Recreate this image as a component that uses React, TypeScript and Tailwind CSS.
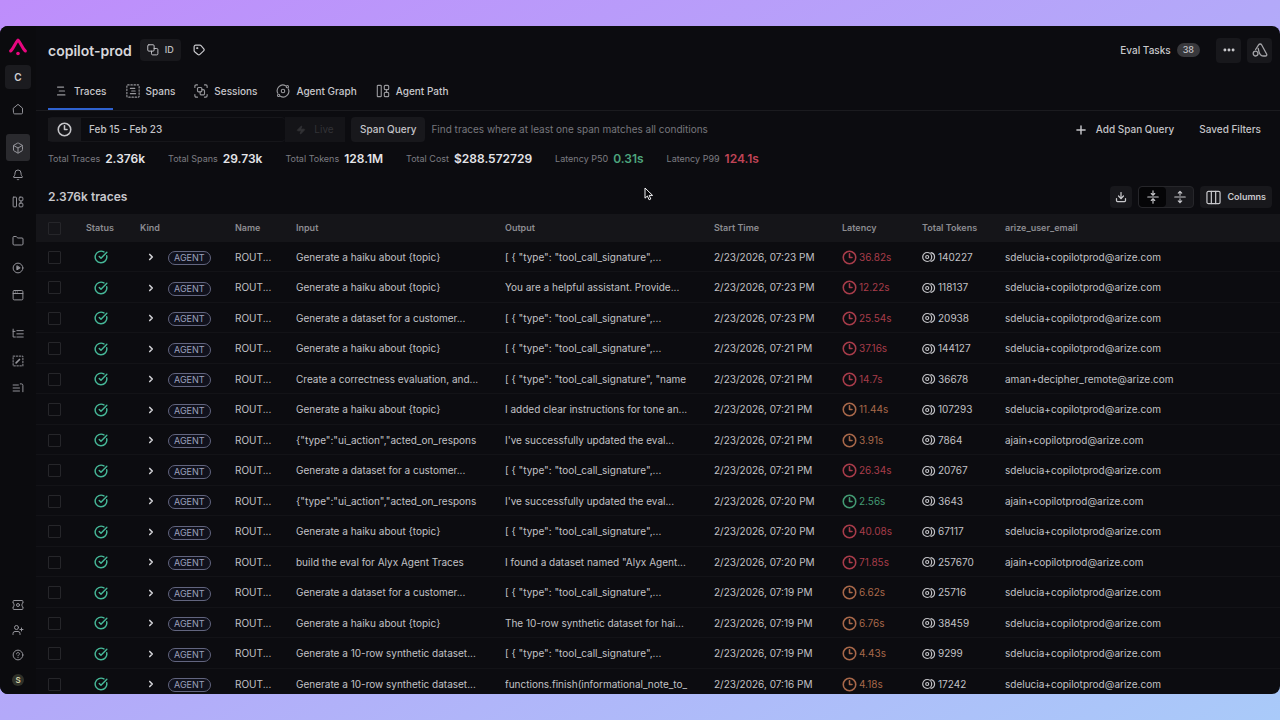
import React, { useState } from "react";
import {
  Bell,
  Box,
  ChevronRight,
  CircleCheckBig,
  CirclePlay,
  Clock3,
  Download,
  Ellipsis,
  Folder,
  Plus,
  UserPlus,
  Zap,
} from "lucide-react";

type LatencyLevel = "high" | "medium" | "low";

interface Trace {
  input: string;
  output: string;
  startTime: string;
  latency: string;
  level: LatencyLevel;
  tokens: string;
  email: string;
}

const HAIKU = "Generate a haiku about {topic}";
const DATASET = "Generate a dataset for a customer...";
const SYNTHETIC = "Generate a 10-row synthetic dataset...";
const UI_ACTION = '{"type":"ui_action","acted_on_respons';
const TOOL_CALL = '[ { "type": "tool_call_signature",...';
const EVAL_UPDATED = "I've successfully updated the eval...";
const SDELUCIA = "sdelucia+copilotprod@arize.com";
const AJAIN = "ajain+copilotprod@arize.com";

const traces: Trace[] = [
  { input: HAIKU, output: TOOL_CALL, startTime: "2/23/2026, 07:23 PM", latency: "36.82s", level: "high", tokens: "140227", email: SDELUCIA },
  { input: HAIKU, output: "You are a helpful assistant. Provide...", startTime: "2/23/2026, 07:23 PM", latency: "12.22s", level: "high", tokens: "118137", email: SDELUCIA },
  { input: DATASET, output: TOOL_CALL, startTime: "2/23/2026, 07:23 PM", latency: "25.54s", level: "high", tokens: "20938", email: SDELUCIA },
  { input: HAIKU, output: TOOL_CALL, startTime: "2/23/2026, 07:21 PM", latency: "37.16s", level: "high", tokens: "144127", email: SDELUCIA },
  { input: "Create a correctness evaluation, and...", output: '[ { "type": "tool_call_signature", "name', startTime: "2/23/2026, 07:21 PM", latency: "14.7s", level: "high", tokens: "36678", email: "aman+decipher_remote@arize.com" },
  { input: HAIKU, output: "I added clear instructions for tone an...", startTime: "2/23/2026, 07:21 PM", latency: "11.44s", level: "medium", tokens: "107293", email: SDELUCIA },
  { input: UI_ACTION, output: EVAL_UPDATED, startTime: "2/23/2026, 07:21 PM", latency: "3.91s", level: "medium", tokens: "7864", email: AJAIN },
  { input: DATASET, output: TOOL_CALL, startTime: "2/23/2026, 07:21 PM", latency: "26.34s", level: "high", tokens: "20767", email: SDELUCIA },
  { input: UI_ACTION, output: EVAL_UPDATED, startTime: "2/23/2026, 07:20 PM", latency: "2.56s", level: "low", tokens: "3643", email: AJAIN },
  { input: HAIKU, output: TOOL_CALL, startTime: "2/23/2026, 07:20 PM", latency: "40.08s", level: "high", tokens: "67117", email: SDELUCIA },
  { input: "build the eval for Alyx Agent Traces", output: 'I found a dataset named "Alyx Agent...', startTime: "2/23/2026, 07:20 PM", latency: "71.85s", level: "high", tokens: "257670", email: AJAIN },
  { input: DATASET, output: TOOL_CALL, startTime: "2/23/2026, 07:19 PM", latency: "6.62s", level: "medium", tokens: "25716", email: SDELUCIA },
  { input: HAIKU, output: "The 10-row synthetic dataset for hai...", startTime: "2/23/2026, 07:19 PM", latency: "6.76s", level: "medium", tokens: "38459", email: SDELUCIA },
  { input: SYNTHETIC, output: TOOL_CALL, startTime: "2/23/2026, 07:19 PM", latency: "4.43s", level: "medium", tokens: "9299", email: SDELUCIA },
  { input: SYNTHETIC, output: "functions.finish(informational_note_to_", startTime: "2/23/2026, 07:16 PM", latency: "4.18s", level: "medium", tokens: "17242", email: SDELUCIA },
];

const latencyColors: Record<LatencyLevel, string> = {
  high: "text-[#a83c4a]",
  medium: "text-[#a8684a]",
  low: "text-[#439a73]",
};

const stats = [
  { label: "Total Traces", value: "2.376k", color: "text-[#e4e4e8]" },
  { label: "Total Spans", value: "29.73k", color: "text-[#e4e4e8]" },
  { label: "Total Tokens", value: "128.1M", color: "text-[#e4e4e8]" },
  { label: "Total Cost", value: "$288.572729", color: "text-[#e4e4e8]" },
  { label: "Latency P50", value: "0.31s", color: "text-[#4ea57d]" },
  { label: "Latency P99", value: "124.1s", color: "text-[#c04457]" },
];

interface GlyphProps {
  children: React.ReactNode;
  className?: string;
}

// 16-unit stroke icon, used for everything lucide does not ship
function Glyph({ children, className = "size-3" }: GlyphProps) {
  return (
    <svg
      className={`shrink-0 ${className}`}
      viewBox="0 0 16 16"
      fill="none"
      stroke="currentColor"
      strokeWidth={1.3}
      strokeLinecap="round"
      strokeLinejoin="round"
      aria-hidden="true"
    >
      {children}
    </svg>
  );
}

function PathIcon({ className }: { className?: string }) {
  return (
    <Glyph className={className}>
      <rect x="1.5" y="1.5" width="4.5" height="13" rx="0.8" />
      <rect x="9.5" y="1.5" width="5" height="5" rx="1.2" />
      <rect x="9.5" y="9.5" width="5" height="5" rx="1.2" />
      <path d="M12 6.5v3" />
    </Glyph>
  );
}

function TokensIcon() {
  return (
    <svg
      className="h-3 w-3.5 shrink-0"
      viewBox="0 0 14 12"
      fill="none"
      stroke="currentColor"
      strokeWidth={1.2}
      aria-hidden="true"
    >
      <circle cx="5.2" cy="6" r="4.5" />
      <circle cx="5.2" cy="6" r="1.5" />
      <path d="M8 1.6a4.500 4.500 0 0 1 0 8.800" strokeLinecap="round" transform="translate(1 0)" />
    </svg>
  );
}

function NavButton({
  label,
  active,
  short,
  children,
}: {
  label: string;
  active?: boolean;
  short?: boolean;
  children: React.ReactNode;
}) {
  return (
    <button
      type="button"
      aria-label={label}
      className={`flex w-6 items-center justify-center rounded-[3px] ${
        short ? "h-[25px]" : "h-[27px]"
      } ${active ? "bg-[#2a2a2e]" : ""}`}
    >
      {children}
    </button>
  );
}

function Sidebar() {
  return (
    <nav className="flex w-9 shrink-0 flex-col items-center bg-[#0b0b0e] pt-2 pb-0.5 text-[#96969c]">
      <a href="#" aria-label="Home page" className="flex h-[25px] items-center">
        <svg className="size-5" viewBox="0 0 20 20" fill="none" aria-hidden="true">
          <path
            d="M2.6 14C5.2 12 7 6.200 10 3c3 3.200 4.800 9 7.400 11"
            stroke="#e8067f"
            strokeWidth={3}
            strokeLinecap="round"
            strokeLinejoin="round"
          />
          <circle cx="10" cy="16.5" r="1.8" fill="#e8067f" />
        </svg>
      </a>
      <button
        type="button"
        className="mt-1.5 h-6 w-[26px] rounded bg-[#1b1b1f] text-[10px] font-semibold text-[#d0d0d4]"
      >
        C
      </button>
      <div className="mt-1.5 flex flex-col gap-3">
        <NavButton label="Home">
          <Glyph>
            <path d="M2 6.8 8 1.8l6 5V13a1.5 1.5 0 0 1-1.5 1.5h-9A1.5 1.5 0 0 1 2 13z" />
          </Glyph>
        </NavButton>
        <div className="flex flex-col">
          <NavButton label="Projects" active>
            <Box className="size-3" />
          </NavButton>
          <NavButton label="Monitors">
            <Bell className="size-3" />
          </NavButton>
          <NavButton label="Dashboards">
            <PathIcon className="size-3" />
          </NavButton>
        </div>
        <div className="flex flex-col">
          <NavButton label="Datasets">
            <Folder className="size-3" />
          </NavButton>
          <NavButton label="Playground">
            <Glyph>
              <circle cx="8" cy="8" r="6.5" />
              <path d="M6.5 5.5v5L10.500 8z" fill="currentColor" />
            </Glyph>
          </NavButton>
          <NavButton label="Prompt Hub">
            <Glyph>
              <rect x="1.5" y="2" width="13" height="12.5" rx="1.5" />
              <path d="M1.5 6h13M4.5 4h.1M7 4h.1" />
            </Glyph>
          </NavButton>
        </div>
        <div className="flex flex-col">
          <NavButton label="Evaluators">
            <Glyph>
              <path d="M1.5 1.5V12h3M1.5 4.5H4M6.5 3.5H15M6.5 7.8H15M6.5 12H15" />
            </Glyph>
          </NavButton>
          <NavButton label="Annotations">
            <Glyph>
              <rect x="1.5" y="1.5" width="13" height="13" strokeDasharray="2 2" />
              <path d="M5.5 10.5 10 6" strokeWidth={2.2} />
            </Glyph>
          </NavButton>
          <NavButton label="Queues">
            <Glyph>
              <path d="M1.5 4h7M1.5 8H10M1.5 12H10M11 2.5h1.5a2 2 0 0 1 2 2V13" />
            </Glyph>
          </NavButton>
        </div>
      </div>
      <div className="mt-auto flex flex-col">
        <NavButton label="Usage" short>
          <Glyph>
            <path d="M1.5 5V3a1 1 0 0 1 1-1h11a1 1 0 0 1 1 1v2M1.5 11v2a1 1 0 0 0 1 1h11a1 1 0 0 0 1-1v-2M1.5 5c2 .5 2 5.5 0 6M14.5 5c-2 .5-2 5.5 0 6" />
            <circle cx="8" cy="8" r="2" />
          </Glyph>
        </NavButton>
        <NavButton label="Invite user" short>
          <UserPlus className="size-3" />
        </NavButton>
        <NavButton label="Help" short>
          <Glyph>
            <circle cx="8" cy="8" r="6.5" />
            <path d="M6 6.5c0-1.2 1-1.7 2-1.7s2 .6 2 1.7S8 7.8 8 9M8 11.2v.1" />
          </Glyph>
        </NavButton>
        <NavButton label="Account" short>
          <span className="flex size-3 items-center justify-center rounded-full bg-[#2f3129] text-[8px] font-semibold text-[#cfcda6]">
            S
          </span>
        </NavButton>
      </div>
    </nav>
  );
}

const tabs = [
  {
    label: "Traces",
    icon: (
      <Glyph className="size-3.5">
        <path d="M4 3.5h7M6 8h6M4 12.5h8.5" />
      </Glyph>
    ),
  },
  {
    label: "Spans",
    icon: (
      <Glyph className="size-3.5">
        <rect x="1" y="1" width="14" height="14" rx="1" strokeDasharray="1.6 2" />
        <path d="M5 5h5M6.5 8h4M5 11h6" />
      </Glyph>
    ),
  },
  {
    label: "Sessions",
    icon: (
      <Glyph className="size-3.5">
        <path d="M1 4V2.5A1.5 1.5 0 0 1 2.5 1H4M12 1h1.5A1.5 1.5 0 0 1 15 2.5V4M15 12v1.5a1.5 1.5 0 0 1-1.5 1.5H12M4 15H2.5A1.5 1.5 0 0 1 1 13.5V12" />
        <rect x="4" y="4" width="5" height="5" rx="1.2" />
        <path d="M9 6.5h1.5A1.5 1.5 0 0 1 12 8v3a1.5 1.5 0 0 1-1.5 1.5h-2A1.5 1.5 0 0 1 7 11V9" />
      </Glyph>
    ),
  },
  {
    label: "Agent Graph",
    icon: (
      <Glyph className="size-3.5">
        <path d="M14 5.5A6.5 6.5 0 0 1 5 14M2 10.5A6.5 6.5 0 0 1 11 2" />
        <circle cx="8" cy="8" r="2" />
        <circle cx="13" cy="3" r="1.3" />
        <circle cx="3" cy="13" r="1.3" />
      </Glyph>
    ),
  },
  { label: "Agent Path", icon: <PathIcon className="size-3.5" /> },
];

function Header() {
  return (
    <header className="flex h-12 shrink-0 items-center pr-2 pl-3">
      <h1 className="text-[14px] font-semibold text-[#d6d6da]">copilot-prod</h1>
      <button
        type="button"
        className="ml-2 flex h-[22px] items-center gap-1.5 rounded bg-[#18181c] px-[7px] text-[9px] font-medium text-[#c0c0c4]"
      >
        <Glyph className="size-3">
          <rect x="1" y="1" width="8.5" height="8.5" rx="1.5" />
          <path d="M9.5 6H13a1.5 1.5 0 0 1 1.5 1.5V13a1.5 1.5 0 0 1-1.5 1.5H7.5A1.5 1.5 0 0 1 6 13V9.5" />
        </Glyph>
        ID
      </button>
      <button type="button" aria-label="Edit tags" className="ml-3 text-[#c8c8cc]">
        <Glyph className="size-3">
          <path
            d="M1.500 3.500a2 2 0 0 1 2-2h5.700a2 2 0 0 1 1.500.700l3.700 4.300a2 2 0 0 1-.2 2.700l-5 4.700a2 2 0 0 1-2.700 0l-4.300-3.500a2 2 0 0 1-.7-1.500z"
            strokeWidth={1.6}
          />
          <circle cx="5.5" cy="5.5" r="0.8" fill="currentColor" />
        </Glyph>
      </button>
      <div className="ml-auto flex items-center">
        <a href="#eval-tasks" className="flex items-center gap-1.5 text-[10px] font-medium text-[#c8c8cc]">
          Eval Tasks
          <span className="flex h-3.5 items-center rounded-full bg-[#38383c] px-1.5 text-[9px]">
            38
          </span>
        </a>
        <button
          type="button"
          aria-label="More actions"
          className="ml-4 flex size-[25px] items-center justify-center rounded bg-[#18181c] text-[#d0d0d4]"
        >
          <Ellipsis className="size-3.5" strokeWidth={3} />
        </button>
        <button
          type="button"
          aria-label="Open Alyx"
          className="ml-1.5 flex size-[25px] items-center justify-center rounded bg-[#18181c] text-[#a4a4a8]"
        >
          <Glyph className="size-4">
            <circle cx="3.6" cy="11.6" r="2.4" />
            <path d="M3.600 7.500 6.600 2.900c.8-1.200 2.400-1.200 3.100.1l4.900 9c.6 1.100 0 2-1.200 2h-1.600c-2.600 0-4.200-1.800-4.800-4.200L6.200 6.500" />
          </Glyph>
        </button>
      </div>
    </header>
  );
}

function QueryBar() {
  return (
    <div className="flex h-[37px] shrink-0 items-center pr-[19px] pl-3 text-[10px] text-[#c4c4c8]">
      <button
        type="button"
        className="flex h-[25px] w-[237px] items-center rounded-sm border-y border-[#16161a] text-left font-medium"
      >
        <span className="flex h-full w-[33px] items-center justify-center bg-[#18181c]">
          <Clock3 className="size-[15px]" strokeWidth={2.5} />
        </span>
        <span className="ml-2">Feb 15 - Feb 23</span>
      </button>
      <button
        type="button"
        disabled
        className="flex h-[25px] w-[60px] items-center justify-center gap-2 bg-[#141418] text-[#323236]"
      >
        <Zap className="size-2.5 fill-current" />
        Live
      </button>
      <label
        htmlFor="span-query"
        className="ml-1.5 flex h-[25px] items-center rounded-sm bg-[#18181c] px-[9px] font-medium"
      >
        Span Query
      </label>
      <input
        id="span-query"
        type="text"
        placeholder="Find traces where at least one span matches all conditions"
        className="ml-1.5 min-w-0 flex-1 bg-transparent text-[10px] outline-none placeholder:text-[#77777d]"
      />
      <button type="button" className="flex items-center gap-2 font-medium">
        <Plus className="size-3.5" strokeWidth={2.5} />
        Add Span Query
      </button>
      <button type="button" className="ml-[25px] font-medium">
        Saved Filters
      </button>
    </div>
  );
}

function TableToolbar() {
  return (
    <div className="mt-2.5 flex h-[34px] shrink-0 items-center pr-2 pl-3 text-[#c8c8cc]">
      <h2 className="text-[12px] font-semibold">2.376k traces</h2>
      <button
        type="button"
        aria-label="Download"
        className="ml-auto flex size-[22px] items-center justify-center rounded bg-[#18181c]"
      >
        <Download className="size-3" strokeWidth={2.5} />
      </button>
      <div className="ml-1.5 flex h-[22px] rounded border border-[#26262a] bg-[#18181c]">
        <button
          type="button"
          aria-label="Compact rows"
          className="flex w-[27px] items-center justify-center rounded bg-[#050507]"
        >
          <Glyph className="size-3.5">
            <path d="M2 8h12M8 1v4.5M6 4l2 2 2-2M8 15v-4.5M6 12l2-2 2 2" />
          </Glyph>
        </button>
        <button
          type="button"
          aria-label="Expand rows"
          className="flex w-[27px] items-center justify-center"
        >
          <Glyph className="size-3.5">
            <path d="M2 8h12M8 6V1.5M6 3.5l2-2 2 2M8 10v4.5M6 12.5l2 2 2-2" />
          </Glyph>
        </button>
      </div>
      <button
        type="button"
        className="ml-1.5 flex h-[22px] items-center gap-1.5 rounded bg-[#18181c] px-1.5 text-[9px] font-semibold"
      >
        <Glyph className="size-[15px]">
          <rect x="1" y="1.5" width="14" height="13" rx="1.5" />
          <path d="M5.7 1.5v13M10.3 1.5v13" />
        </Glyph>
        Columns
      </button>
    </div>
  );
}

function TracesTable() {
  return (
    <div className="min-h-0 flex-1 overflow-hidden">
      <table className="w-full table-fixed text-left text-[10px] text-[#c2c2c6]">
        <colgroup>
          <col className="w-[50px]" />
          <col className="w-[54px]" />
          <col className="w-[95px]" />
          <col className="w-[61px]" />
          <col className="w-[209px]" />
          <col className="w-[209px]" />
          <col className="w-[128px]" />
          <col className="w-[80px]" />
          <col className="w-[83px]" />
          <col />
        </colgroup>
        <thead className="bg-[#151519] text-[9px] text-[#8c8c91]">
          <tr className="h-7">
            <th className="pl-3">
              <input
                type="checkbox"
                aria-label="Select all traces"
                className="block size-[13px] appearance-none rounded-[1px] border border-[#26262a]"
              />
            </th>
            <th className="font-semibold">Status</th>
            <th className="font-semibold">Kind</th>
            <th className="font-semibold">Name</th>
            <th className="font-semibold">Input</th>
            <th className="font-semibold">Output</th>
            <th className="font-semibold">Start Time</th>
            <th className="font-semibold">Latency</th>
            <th className="font-semibold">Total Tokens</th>
            <th className="font-semibold">arize_user_email</th>
          </tr>
        </thead>
        <tbody>
          {traces.map((trace, index) => (
            <tr
              key={index}
              className="h-[30px] shadow-[inset_0_-1px_0_#131317] even:h-[31px]"
            >
              <td className="pl-3">
                <input
                  type="checkbox"
                  aria-label={`Select trace ${index + 1}`}
                  className="block size-[13px] appearance-none rounded-[1px] border border-[#26262a]"
                />
              </td>
              <td>
                <CircleCheckBig className="ml-2 size-[14px] text-[#46b898]" strokeWidth={2.5} />
              </td>
              <td>
                <div className="flex items-center">
                  <button type="button" aria-label="Expand trace" className="ml-1.5 text-[#d0d0d4]">
                    <ChevronRight className="size-2.5" strokeWidth={4} />
                  </button>
                  <span className="mt-0.5 ml-3 flex h-3.5 items-center rounded-full border border-[#62657f] bg-[#10111c] px-[5px] text-[9px] text-[#9da1bd]">
                    AGENT
                  </span>
                </div>
              </td>
              <td>ROUT...</td>
              <td className="overflow-hidden whitespace-nowrap">{trace.input}</td>
              <td className="overflow-hidden whitespace-nowrap">{trace.output}</td>
              <td>{trace.startTime}</td>
              <td>
                <div className={`flex items-center gap-0.5 ${latencyColors[trace.level]}`}>
                  <Clock3 className="size-[15px]" strokeWidth={2.5} />
                  {trace.latency}
                </div>
              </td>
              <td>
                <div className="flex items-center gap-0.5">
                  <TokensIcon />
                  {trace.tokens}
                </div>
              </td>
              <td>{trace.email}</td>
            </tr>
          ))}
        </tbody>
      </table>
    </div>
  );
}

export default function App() {
  const [activeTab, setActiveTab] = useState("Traces");

  return (
    <div className="relative flex h-screen flex-col bg-linear-to-br from-[#be8dfb] via-[#b3a9f9] to-[#a9caf9] py-[26px] font-[Inter,sans-serif]">
      <div className="flex min-h-0 flex-1 overflow-hidden rounded-lg bg-[#0c0c10]">
        <Sidebar />
        <main className="flex min-w-0 flex-1 flex-col">
          <Header />
          <div className="flex h-[37px] shrink-0 gap-[7px] border-b border-[#1b1b1f] pl-3">
            {tabs.map((tab) => (
              <button
                key={tab.label}
                type="button"
                onClick={() => setActiveTab(tab.label)}
                className={`flex items-center gap-1.5 border-b-2 px-1.5 text-[10px] font-medium text-[#c8c8cc] ${
                  tab.label === activeTab ? "border-[#2f62d0]" : "border-transparent"
                }`}
              >
                <span className="text-[#98989c]">{tab.icon}</span>
                {tab.label}
              </button>
            ))}
          </div>
          <QueryBar />
          <dl className="flex h-[22px] shrink-0 items-center gap-[23px] pl-3">
            {stats.map((stat) => (
              <div key={stat.label} className="flex items-center gap-[5px]">
                <dt className="text-[9px] text-[#7c7c82]">{stat.label}</dt>
                <dd className={`text-[12px] font-semibold ${stat.color}`}>{stat.value}</dd>
              </div>
            ))}
          </dl>
          <TableToolbar />
          <TracesTable />
        </main>
      </div>

      {/* mouse pointer */}
      <svg
        className="pointer-events-none absolute top-[187px] left-[644px] h-3.5 w-2.5"
        viewBox="0 0 10 14"
        aria-hidden="true"
      >
        <path
          d="M1 1v10.2l2.4-2.2 1.7 3.8 1.7-.8L5.2 8.4h3.400z"
          fill="#08080a"
          stroke="#f4f4f6"
          strokeWidth={1}
        />
      </svg>
    </div>
  );
}
